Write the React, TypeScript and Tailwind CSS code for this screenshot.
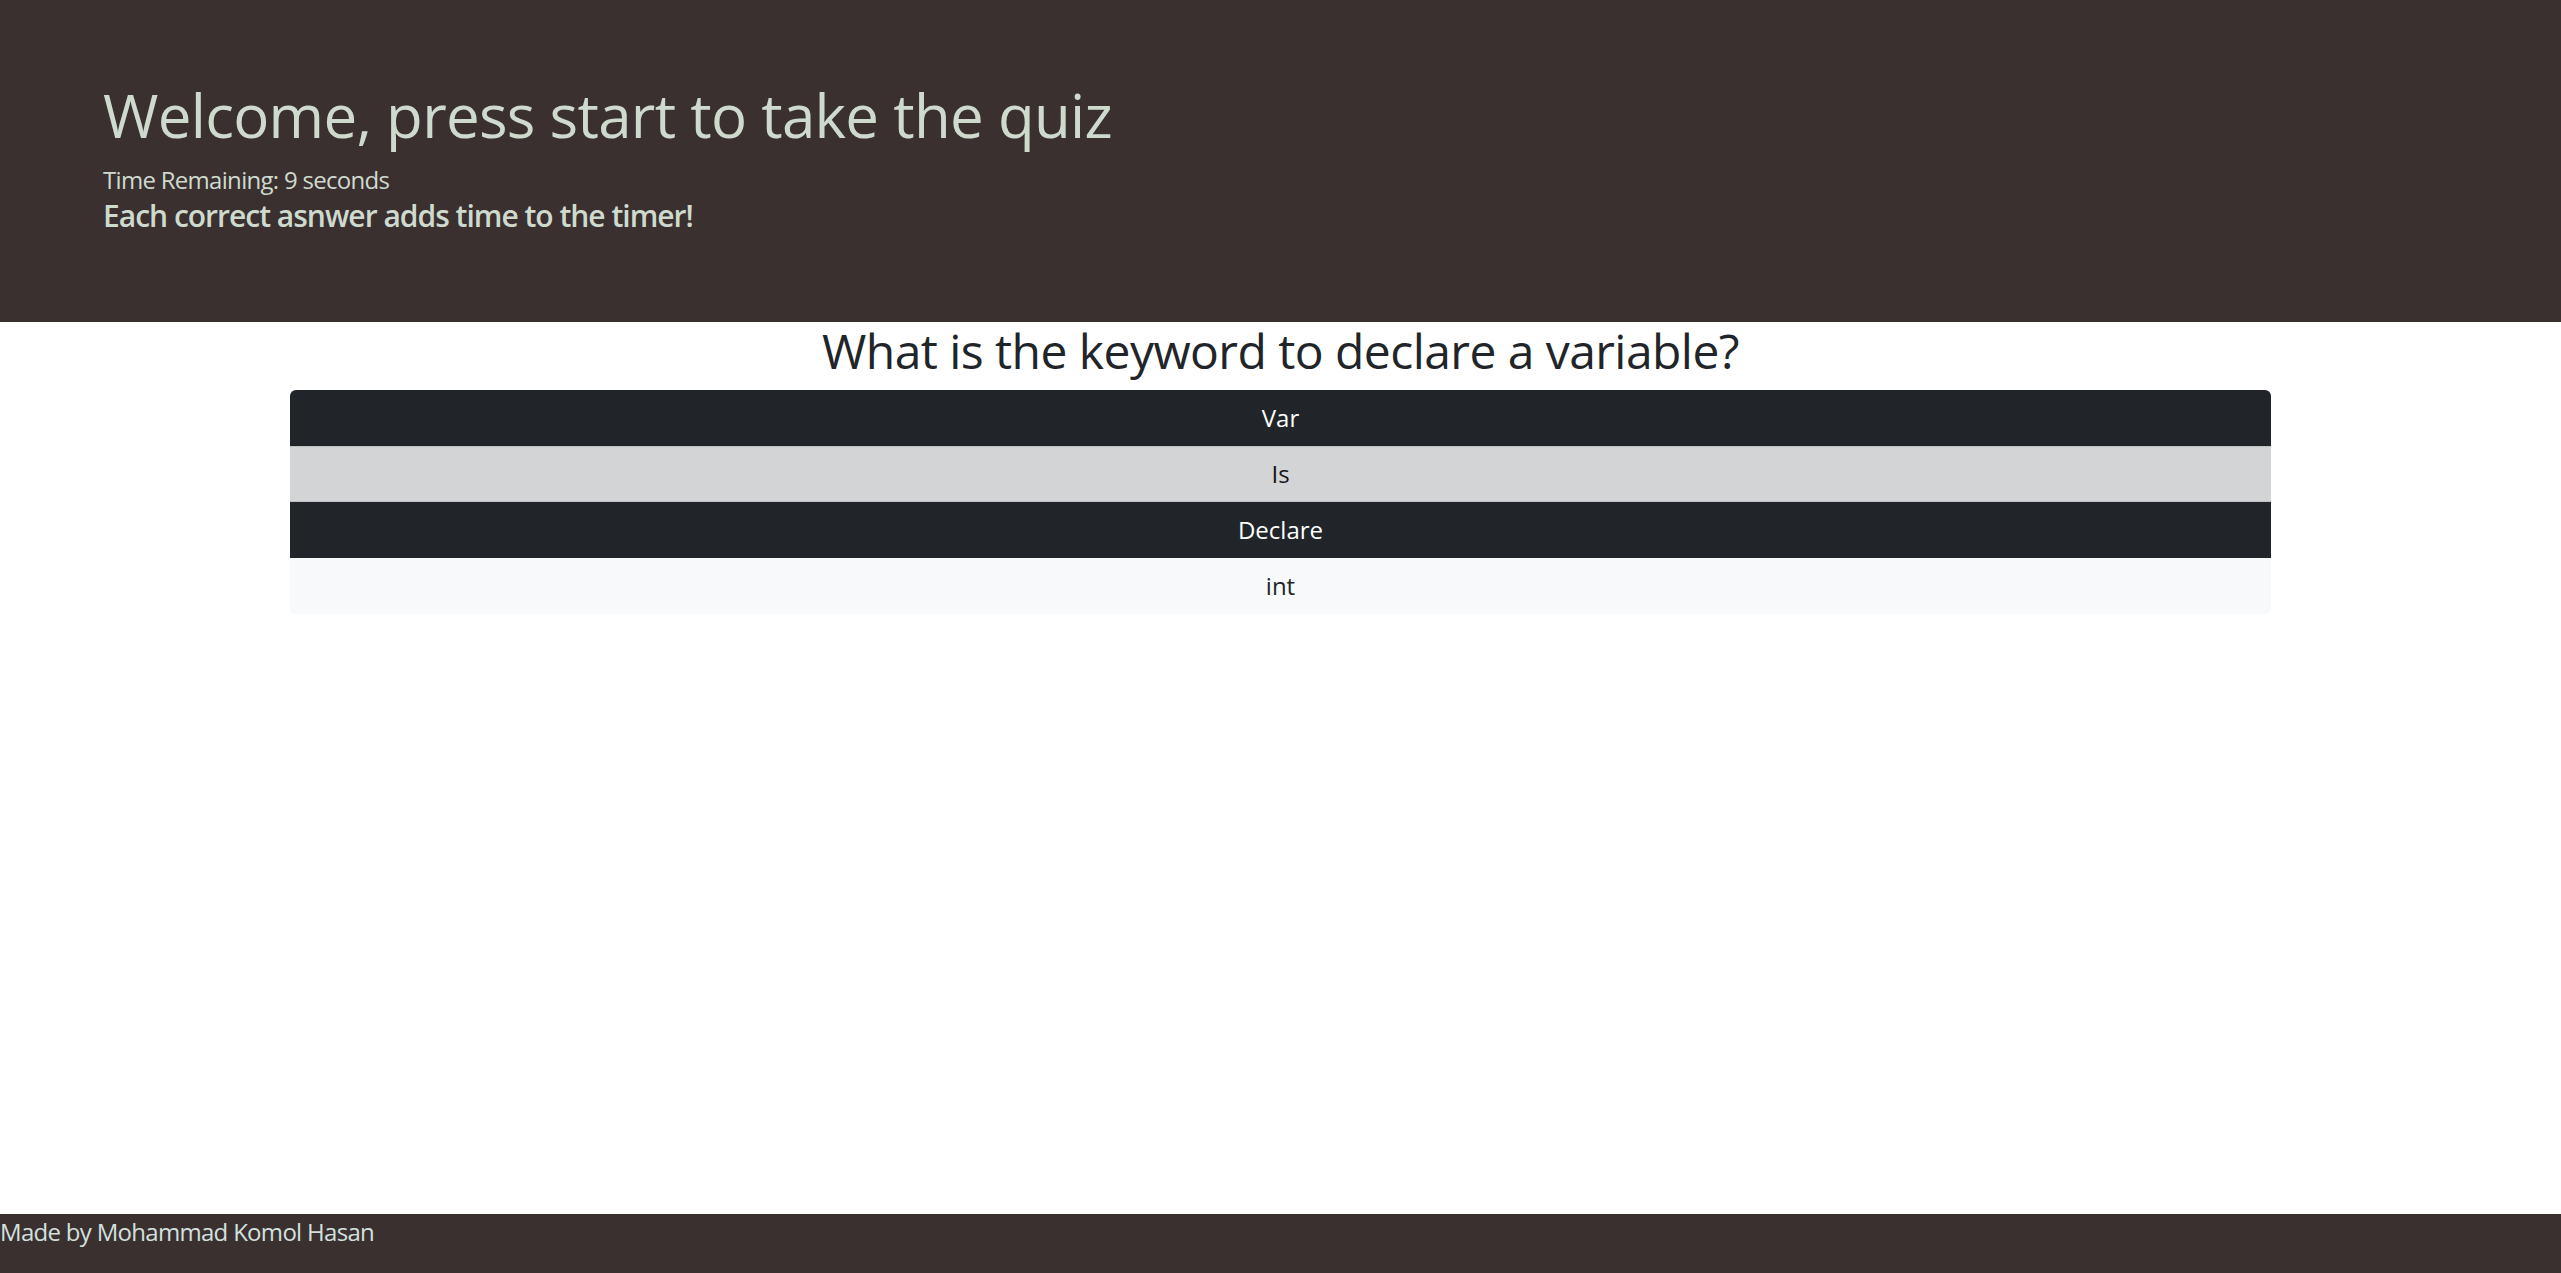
import React from "react";

export default function App() {
  const rows = [
    { label: "Var", cls: "bg-[#212529] text-white rounded-t-[6px]" },
    { label: "Is", cls: "bg-[#d3d4d5] text-[#141619] border-y border-[#bfc0c1]" },
    { label: "Declare", cls: "bg-[#212529] text-white" },
    { label: "int", cls: "bg-[#f8f9fa] text-[#212529] rounded-b-[6px]" },
  ];
  return (
    <div className="min-h-[1273px] flex flex-col bg-white font-['Open_Sans',_'Noto_Sans',_sans-serif]">
      <header className="h-[322px] bg-[#3a3030] pl-[103px] pt-[79px] text-[#cfdacf]">
        <h1 className="text-[60px] leading-[72px] font-normal tracking-[-0.7px] mb-[11px]">Welcome, press start to take the quiz</h1>
        <div className="text-[24px] leading-[36px] tracking-[-0.7px]">Time Remaining: 9 seconds</div>
        <h5 className="text-[30px] leading-[36px] font-semibold tracking-[-1px]">Each correct asnwer adds time to the timer!</h5>
      </header>
      <main className="flex-1 flex flex-col items-center">
        <h2 className="text-[48px] leading-[57.6px] font-normal tracking-[-0.55px] text-[#212529] mb-[10px]">What is the keyword to declare a variable?</h2>
        <div className="w-[1981px] flex flex-col">
          {rows.map((r) => (
            <div key={r.label} className={`h-[56px] flex items-center justify-center text-[24px] ${r.cls}`}>
              {r.label}
            </div>
          ))}
        </div>
      </main>
      <footer className="h-[59px] bg-[#3a3030] text-[#d3e0df] text-[24px] leading-[36px] tracking-[-0.7px]">Made by Mohammad Komol Hasan</footer>
    </div>
  );
}
